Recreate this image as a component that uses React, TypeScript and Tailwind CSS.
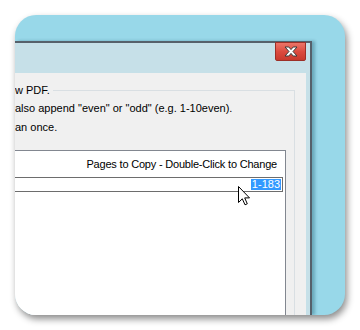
import React from 'react';

const FONT = { fontFamily: '"Liberation Sans", Arial, sans-serif' };

function CloseGlyph() {
  return (
    <svg width="14" height="11" viewBox="-1 -1 14 11">
      <polygon
        points="0,0 3.8,0 6,2.6 8.2,0 12,0 8,4.5 12,9 8.2,9 6,6.4 3.8,9 0,9 4,4.5"
        fill="#ffffff"
        stroke="#3b3b3b"
        strokeWidth="1"
        strokeLinejoin="round"
      />
    </svg>
  );
}

function Cursor() {
  return (
    <svg width="13" height="20" viewBox="0 0 13 20">
      <path
        d="M0.5 0.5 L0.5 16.5 L4.3 12.8 L7 18.8 L9.3 17.8 L6.7 11.9 L11.5 11.9 Z"
        fill="#ffffff"
        stroke="#000000"
        strokeWidth="1"
        strokeLinejoin="miter"
      />
    </svg>
  );
}

export default function App() {
  return (
    <div className="w-[360px] h-[330px] bg-white pt-[15px] pl-[15px]" style={FONT}>
      <div className="relative w-[330px] h-[300px] rounded-[21px] bg-[#98d8e9] overflow-hidden shadow-[2px_4px_7px_rgba(0,0,0,0.45)] flex flex-col">
        <div className="h-[26px] shrink-0" />

        <div className="flex flex-1 min-h-0">
          {/* dialog window, clipped by the frame */}
          <div className="w-[297px] flex flex-col border-t-2 border-r-2 border-[#56616b] shadow-[3px_0_3px_rgba(0,60,80,0.3)]">
            <div className="h-[30px] shrink-0 bg-[#c6e0e8] flex justify-end pr-[4px]">
              <button className="-mt-[1px] w-[31px] h-[19px] flex items-center justify-center border border-[#9c2f27] rounded-b-[2px] bg-gradient-to-b from-[#ec7468] via-[#dc4b3f] to-[#c8392d]">
                <CloseGlyph />
              </button>
            </div>

            <div className="flex flex-1 min-h-0">
              <div className="w-[291px] bg-[#f0f0f0] pt-[8px] flex flex-col text-[11px] text-black">
                <fieldset className="flex-1 min-h-0 flex flex-col border-t border-r border-[#d9dfe3] mr-[11px]">
                  <legend className="pr-[3px] leading-[19px]">w PDF.</legend>
                  <p className="leading-[19px] -mt-[1px]">also append "even" or "odd" (e.g. 1-10even).</p>
                  <p className="leading-[19px]">an once.</p>

                  {/* list view */}
                  <div className="mt-[13px] mr-[8px] flex-1 bg-white border-t border-r border-[#828790] flex flex-col">
                    <div className="h-[26px] flex items-center justify-end pr-[8px] pt-[1px] tracking-[-0.2px]">
                      Pages to Copy - Double-Click to Change
                    </div>
                    <div className="relative h-[15px] mr-[2px] border-t border-b border-r border-[#6d6d6d] flex items-center justify-end pr-[1px]">
                      <span className="bg-[#3399ff] text-white leading-[11px] px-[1px]">1-183</span>
                      <div className="absolute left-[223px] top-[8px]">
                        <Cursor />
                      </div>
                    </div>
                  </div>
                </fieldset>
              </div>
              <div className="w-[4px] bg-[#c6e0e8]" />
            </div>
          </div>
          <div className="flex-1" />
        </div>
      </div>
    </div>
  );
}
